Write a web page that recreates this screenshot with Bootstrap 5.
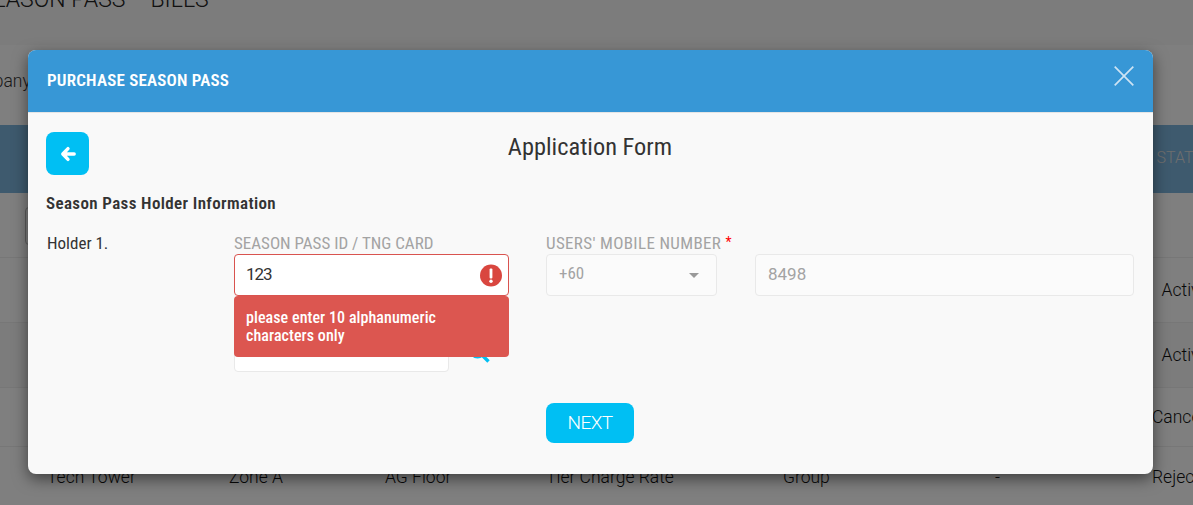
<!DOCTYPE html>
<html lang="en"><head><meta charset="utf-8">
<link href="https://cdn.jsdelivr.net/npm/bootstrap@5.3.0/dist/css/bootstrap.min.css" rel="stylesheet">
<style>
html,body{height:505px;overflow:hidden;margin:0}
body{font-family:"Roboto",sans-serif;font-stretch:75%;background:#fff;color:#333;font-size:17px;position:relative}
.pg-top{height:45px;background:#f8f8f8;overflow:hidden}
.pg-nav{display:flex;gap:25px;margin:-13px 0 0 -21px;font:300 23px/26px "Roboto",sans-serif;white-space:nowrap;color:#222}
.pg-band{height:80px;background:#fff;padding:25px 0 0 0;font:300 17.5px/22px "Roboto",sans-serif;margin-left:-43px}
.pg-head,.pg-line{display:grid;width:1218px;grid-template-columns:182px 156px 161px 237px 212px 157px 66px;padding-left:47px;align-items:center;font:300 17.5px/22px "Roboto",sans-serif;white-space:nowrap}
.pg-head{height:68px;background:#7cb4dc;color:#ddd;font-size:16px;padding-bottom:2px}
.pg-filter{height:64px;background:#fff;padding:14px 0 0 25px}
.pg-box{width:100px;height:38px;border:1px solid #bbb;border-radius:4px}
.pg-line{height:65px;border-top:1px solid #eee;color:#111}
.pg-line.tint{background:#f9f9f9}
.pg-line.low{height:59px;padding-bottom:0}
.pg-line.end{padding-bottom:4px}
.pg-line>span:last-child,.pg-head>span:last-child{text-align:center}
.back-drop{position:absolute;inset:0;background:rgba(0,0,0,.5)}
.dlg{position:absolute;left:28px;top:50px;width:1125px;height:424px;background:#f9f9f9;border-radius:8px;box-shadow:0 5px 15px rgba(0,0,0,.5);overflow:hidden}
.dlg-head{height:63px;background:#3797d6;border-bottom:1px solid #e5e5e5;color:#fff;font-size:17px;font-weight:600;letter-spacing:.2px;display:flex;align-items:center;justify-content:space-between;padding:0 19px}
.x-ic{margin-top:-11px}
.dlg-body{padding:19px 19px 0 18px}
.btn-sky,.btn-sky:hover{background:#00bff3;color:#fff;border:0}
.back{width:43px;height:43px;border-radius:8px;padding:0;flex:none}
.dlg-title{flex:1;margin:0;padding:0 43px 0 0;font-size:24.4px;line-height:30px;color:#333;text-align:center;font-weight:400}
.sec{font-size:17px;font-weight:600;letter-spacing:.37px;line-height:20px;color:#333;margin:18px 0 0}
.form-grid{display:flex;margin-top:20px}
.hold{width:188px;padding-left:1px;line-height:20px}
.c-id{width:275px;margin-right:37px;position:relative}
.c-mob{flex:1}
.lab{display:block;color:#a3a3a3;font-size:17px;line-height:20px;white-space:nowrap;margin:0 0 1px}
.lab-wide{letter-spacing:.35px}
.lab b{color:#f00;font-weight:400;font-size:14px;line-height:0;vertical-align:2px;letter-spacing:0}
.fld.form-control,.fld.form-select{height:42px;border:1px solid #e9e9e9;border-radius:4px;background-color:#fbfbfb;color:#a3a3a3;padding:0 12px 2px;font-size:17px;box-shadow:none}
.fld.form-select{width:171px;flex:none;background-image:none;position:relative;display:flex;align-items:center}
.tri{position:absolute;right:17px;top:18px;width:0;height:0;border:5px solid transparent;border-top-color:#999;border-bottom:0}
.fld.err{border-color:#d9534f;background-color:#fff;color:#333;padding-left:11px;letter-spacing:-1px}
.fld.phone{width:379px;flex:none}
.err-ic{position:absolute;right:7px;top:31px}
.tip{position:absolute;left:0;top:63px;width:275px;height:61px;background:#dc5650;color:#fff;border-radius:4px;padding:13px 12px;font-size:16px;letter-spacing:.07px;line-height:18px;font-weight:500;z-index:2}
.low-row{margin-top:34px;display:flex;align-items:flex-start;gap:20px}
.low-row svg{margin-top:12px}
.fld.low{width:215px;height:42px;background-color:#fff}
.next{display:block;width:88px;height:40px;border-radius:8px;font-size:19px;letter-spacing:-.6px;font-weight:300;line-height:40px;padding:0;margin:31px 0 0 500px}
</style></head><body>
<div class="pg-top"><div class="pg-nav"><span>SEASON PASS</span><span>BILLS</span></div></div>
<div class="pg-band">Company</div>
<div class="pg-head"><span>SITE</span><span>ZONE</span><span>FLOOR</span><span>RATE</span><span>TYPE</span><span>REMARK</span><span>STATUS</span></div>
<div class="pg-filter"><div class="pg-box"></div></div>
<div class="pg-line"><span>Tech Tower</span><span>Zone A</span><span>AG Floor</span><span>Tier Charge Rate</span><span>Group</span><span>-</span><span>Active</span></div>
<div class="pg-line tint"><span>Tech Tower</span><span>Zone A</span><span>AG Floor</span><span>Tier Charge Rate</span><span>Group</span><span>-</span><span>Active</span></div>
<div class="pg-line low"><span>Tech Tower</span><span>Zone A</span><span>AG Floor</span><span>Tier Charge Rate</span><span>Group</span><span>-</span><span>Cancelled</span></div>
<div class="pg-line end"><span>Tech Tower</span><span>Zone A</span><span>AG Floor</span><span>Tier Charge Rate</span><span>Group</span><span>-</span><span>Rejected</span></div>
<div class="back-drop"></div>
<div class="dlg">
 <div class="dlg-head"><span>PURCHASE SEASON PASS</span>
  <svg class="x-ic" width="20" height="20" viewBox="0 0 20 20"><path d="M.7.7 19.3 19.3M19.3.7.7 19.3" stroke="#cde3f3" stroke-width="1.7" fill="none"/></svg></div>
 <div class="dlg-body">
  <div class="d-flex align-items-start">
   <button class="btn btn-sky back" type="button" aria-label="Back"><svg width="16" height="16" viewBox="0 0 16 16"><path d="M8 2.6 2.8 8 8 13.4M3.6 8H14.2" stroke="#fff" stroke-width="3.4" stroke-linecap="round" stroke-linejoin="round" fill="none"/></svg></button>
   <h4 class="dlg-title">Application Form</h4>
  </div>
  <p class="sec">Season Pass Holder Information</p>
  <div class="form-grid">
   <div class="hold">Holder 1.</div>
   <div class="c-id">
    <label class="lab">SEASON PASS ID / TNG CARD</label>
    <input class="form-control fld err" value="123">
    <svg class="err-ic" width="22" height="23" viewBox="0 0 22 23"><circle cx="11" cy="11.5" r="11" fill="#d9463f"/><rect x="9.6" y="4.5" width="2.8" height="10" rx="1" fill="#fff"/><circle cx="11" cy="17.2" r="1.7" fill="#fff"/></svg>
    <div class="tip">please enter 10 alphanumeric characters only</div>
    <div class="low-row"><input class="form-control fld low"><svg width="21" height="21" viewBox="0 0 21 21"><circle cx="8.5" cy="8.5" r="6.5" fill="none" stroke="#00bff3" stroke-width="3"/><path d="M13 13l6.5 6.5" stroke="#00bff3" stroke-width="3.4"/></svg></div>
   </div>
   <div class="c-mob">
    <label class="lab lab-wide">USERS' MOBILE NUMBER <b>*</b></label>
    <div class="d-flex gap-0">
     <div class="form-select fld">+60<span class="tri"></span></div>
     <input class="form-control fld ms-auto phone" value="8498">
    </div>
   </div>
  </div>
  <button class="btn btn-sky next" type="button">NEXT</button>
 </div>
</div>
</body></html>
